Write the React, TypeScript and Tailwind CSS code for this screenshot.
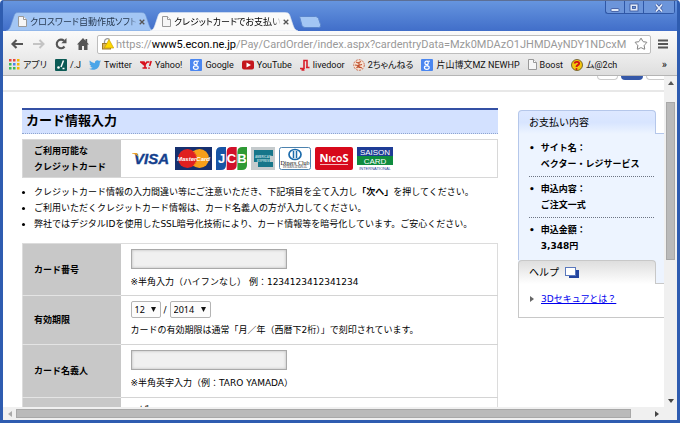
import React from "react";
import { LuStar } from "react-icons/lu";
import { FaTwitter } from "react-icons/fa";

const JP = "font-['DejaVu_Sans','Noto_Sans_CJK_JP',sans-serif]";
const UI = "font-[Roboto,'Noto_Sans_CJK_JP',sans-serif] [font-feature-settings:'palt']";

function PageIcon() {
  return (
    <svg width="9" height="11" viewBox="0 0 9 11" className="shrink-0">
      <path d="M.5.5h5l3 3v7h-8z" fill="#f6f6f6" stroke="#999" />
      <path d="M5.500.5v3h3" fill="#fff" stroke="#999" />
    </svg>
  );
}

function Tab({ title, active }: { title: string; active?: boolean }) {
  return (
    <div className={"relative flex h-[19px] w-[148px] items-center pr-[8px] pl-[12px] " + (active ? "z-10 -ml-[4px]" : "")}>
      <svg className="absolute inset-0 h-full w-full" viewBox="0 0 148 19" preserveAspectRatio="none">
        <path
          d="M0 19C3 18 4 16 5 13L8 4C9 1 10 .5 13 .5H134C138 .5 139 1 140 4L143 13C144 16 145 18 148 19Z"
          fill={active ? "#fafafa" : "#a3c6f4"}
          stroke={active ? "#dfe6f2" : "#6f97d4"}
          strokeWidth=".6"
        />
      </svg>
      <button role="tab" aria-selected={!!active} className="relative flex min-w-0 flex-1 items-center gap-[3px] text-left">
        <PageIcon />
        <span
          className={
            "block h-[14px] min-w-0 flex-1 overflow-hidden text-[9px] leading-[14px] whitespace-nowrap [mask-image:linear-gradient(to_right,#000_92%,transparent)] " +
            (active ? "text-black" : "text-[#26384f]")
          }
        >
          {title}
        </span>
      </button>
      <button aria-label="閉じる" className="relative ml-[1px] p-[1px]">
        <svg width="6" height="6" viewBox="0 0 6 6"><path d="M.7.7l4.600 4.600M5.300.7L.7 5.300" stroke="#555" strokeWidth="1.300" /></svg>
      </button>
    </div>
  );
}

function WindowButtons() {
  const b = "flex h-[13px] items-center justify-center border-r border-[#2f57a6]";
  return (
    <div className="mr-[2px] flex h-[13px] overflow-hidden rounded-b-[3px] border-b border-l border-[#2f57a6] bg-[#6c95da]">
      <button aria-label="最小化" className={b + " w-[19px]"}>
        <svg width="10" height="10"><rect x="1" y="5.500" width="8" height="3" rx="1" fill="#dfe8f7" stroke="#34519a" strokeWidth=".8" /></svg>
      </button>
      <button aria-label="最大化" className={b + " w-[19px]"}>
        <svg width="10" height="10"><rect x="1" y="1" width="8" height="7" fill="#dfe8f7" stroke="#34519a" strokeWidth=".8" /><rect x="3.500" y="3.500" width="3" height="2" fill="#6c95da" stroke="#34519a" strokeWidth=".8" /></svg>
      </button>
      <button aria-label="ウィンドウを閉じる" className={b + " w-[31px]"}>
        <svg width="10" height="10"><path d="M2 1.500l6 7M8 1.500l-6 7" stroke="#34519a" strokeWidth="3" /><path d="M2 1.500l6 7M8 1.500l-6 7" stroke="#e6edf9" strokeWidth="1.800" /></svg>
      </button>
    </div>
  );
}

function Toolbar() {
  return (
    <div className="flex h-[25px] shrink-0 items-center bg-linear-to-b from-[#fafafa] to-[#ececec] pt-[1px] pr-[9px] pl-[8px]">
      <div className="flex w-[86px] shrink-0 items-center gap-[10px]">
        <button aria-label="戻る"><svg width="12" height="10" viewBox="0 0 12 10"><path d="M12 5H2M5.500 1L1.500 5l4 4" fill="none" stroke="#555" strokeWidth="2.200" /></svg></button>
        <button aria-label="進む"><svg width="12" height="10" viewBox="0 0 12 10"><path d="M0 5h10M6.500 1l4 4-4 4" fill="none" stroke="#c4c4c4" strokeWidth="2" /></svg></button>
        <button aria-label="再読み込み"><svg width="12" height="12" viewBox="0 0 12 12"><path d="M9.500 8.500A4.300 4.300 0 1 1 9 2.800" fill="none" stroke="#555" strokeWidth="2.100" /><path d="M11.500 0v5.200H6.300z" fill="#555" /></svg></button>
        <button aria-label="ホーム"><svg width="12" height="12" viewBox="0 0 12 12"><path d="M6 0L0 6.500h1.500V12H5V8h2v4h3.500V6.500H12L10.200 4.500V1H8.500v1.700z" fill="#555" /></svg></button>
      </div>
      <div className="flex h-[19px] min-w-0 flex-1 items-center rounded-[2px] border border-[#bdbdbd] bg-white pr-[2px] pl-[4px]">
        <svg width="12" height="12" viewBox="0 0 12 12" className="shrink-0">
          <path d="M2.500 6V3.500a3 3 0 0 1 5-2" fill="none" stroke="#999" strokeWidth="1.300" />
          <rect x=".5" y="5.500" width="8" height="5.500" fill="#d9b25a" stroke="#a07c2a" />
          <path d="M7 1.500L11.700 10H2.300z" fill="#ffd800" stroke="#c8a000" strokeWidth=".7" />
        </svg>
        <label htmlFor="url" className={UI + " ml-[2px] shrink-0 text-[11px] leading-[17px] text-[#999]"}>
          https://<span className="text-black">www5.econ.ne.jp</span>
        </label>
        <input
          id="url"
          defaultValue="/Pay/CardOrder/index.aspx?cardentryData=Mzk0MDAzO1JHMDAyNDY1NDcxM"
          className={UI + " h-[17px] min-w-0 flex-1 bg-transparent text-[11px] leading-[17px] text-[#999] outline-none"}
        />
        <button aria-label="ブックマークに追加"><LuStar size={14} color="#777" strokeWidth={1.6} /></button>
      </div>
      <button aria-label="メニュー" className="ml-[7px]">
        <svg width="10" height="10"><path d="M0 1.500h10M0 5h10M0 8.500h10" stroke="#555" strokeWidth="2" /></svg>
      </button>
    </div>
  );
}

const appColors = ["#e8453c", "#e8453c", "#f4b400", "#3cba54", "#4885ed", "#f4b400", "#3cba54", "#3cba54", "#f4b400"];

function GoogleIcon() {
  return (
    <svg width="12" height="12" viewBox="0 0 12 12">
      <rect width="12" height="12" rx="1" fill="#4a86f0" />
      <circle cx="5.600" cy="3.900" r="1.700" fill="none" stroke="#fff" strokeWidth="1.200" />
      <ellipse cx="5.800" cy="8.600" rx="2.400" ry="1.800" fill="none" stroke="#fff" strokeWidth="1.200" />
      <path d="M6.500 2.200H9M6 5.500l.8 1.400" stroke="#fff" />
    </svg>
  );
}

const bookmarks: { label: string; icon: React.ReactNode }[] = [
  {
    label: "アプリ",
    icon: (
      <svg width="11" height="11">
        {appColors.map((c, i) => <rect key={i} x={(i % 3) * 4} y={Math.floor(i / 3) * 4} width="2.500" height="2.500" fill={c} />)}
      </svg>
    ),
  },
  { label: "/.J", icon: <svg width="12" height="12"><rect width="12" height="12" rx="1" fill="#0b5a55" /><path d="M8.500 1.500L6 8" stroke="#fff" strokeWidth="1.500" /><circle cx="3.500" cy="8.500" r="1.300" fill="#fff" /><path d="M7.500 9.500h2" stroke="#fff" strokeWidth="1.500" /></svg> },
  { label: "Twitter", icon: <FaTwitter size={12} color="#4aa5e8" /> },
  { label: "Yahoo!", icon: <svg width="12" height="12"><path d="M0 3h4L5 5.500 7 3h2.500M5 5.500V9M2.500 9H7M1 3.200L4.500 6" fill="none" stroke="#d8101c" strokeWidth="1.700" /><path d="M11.200 2L9.600 7M9 8.500v1.300" stroke="#d8101c" strokeWidth="1.600" /></svg> },
  { label: "Google", icon: <GoogleIcon /> },
  { label: "YouTube", icon: <svg width="12" height="12"><rect y="1.500" width="12" height="9" rx="2" fill="#c4161c" /><path d="M4.500 3.500v5L9 6z" fill="#fff" /></svg> },
  { label: "livedoor", icon: <svg width="10" height="12"><path d="M4 10V1.500h3V9" fill="none" stroke="#d9202c" strokeWidth="1.600" /><path d="M0 9.500h4M6 8.500h3.500M1.500 11h3" stroke="#d9202c" strokeWidth="1.500" /></svg> },
  { label: "2ちゃんねる", icon: <svg width="12" height="12"><circle cx="6" cy="6" r="5.300" fill="#f6e3d4" stroke="#c0502e" strokeWidth=".8" strokeDasharray="2 1" /><path d="M3 3l2 1 3-1.500M2 6l3 .5L9 5.500M3.500 9l1.500-1.500L9 9M6 3v6" fill="none" stroke="#c0502e" strokeWidth="1.100" /></svg> },
  { label: "片山博文MZ NEWHP", icon: <GoogleIcon /> },
  { label: "Boost", icon: <PageIcon /> },
  { label: "ム@2ch", icon: <svg width="12" height="12"><circle cx="6" cy="6" r="5.500" fill="#f3c610" stroke="#4a3a10" strokeWidth=".7" /><path d="M3.500 4.500C4 2 9 2.500 8 5 7.500 6.500 5.500 6 5.500 8" fill="none" stroke="#d01515" strokeWidth="1.900" /><circle cx="5.500" cy="10" r="1" fill="#d01515" /></svg> },
];

function Bookmarks() {
  return (
    <nav className={UI + " flex h-[20px] shrink-0 items-center gap-[8px] overflow-hidden border-b border-[#b5b5b5] bg-linear-to-b from-[#ececec] to-[#dedede] pr-[10px] pb-[2px] pl-[6px] text-[9px] leading-[14px] text-[#111]"}>
      {bookmarks.map((b) => (
        <button key={b.label} className="flex shrink-0 items-center gap-[3px] whitespace-nowrap">
          {b.icon}
          <span>{b.label}</span>
        </button>
      ))}
      <button aria-label="その他のブックマーク" className="ml-auto text-[11px]">»</button>
    </nav>
  );
}

function CardLogos() {
  return (
    <div className="flex items-center gap-[4px]">
      <svg role="img" aria-label="VISA" width="40" height="23">
        <text x="3" y="17" fontSize="15" fontWeight="bold" fontStyle="italic" fontFamily="Liberation Sans, sans-serif" fill="#143f8d" stroke="#143f8d" strokeWidth=".4">VISA</text>
        <path d="M1 6h5l2 5C6 8 4 7 1 6.500z" fill="#eda026" />
      </svg>
      <svg role="img" aria-label="MasterCard" width="37" height="23">
        <rect width="37" height="23" fill="#16306f" />
        <circle cx="24.500" cy="11.500" r="9.500" fill="#f79f1a" />
        <circle cx="12.500" cy="11.500" r="9.500" fill="#e02020" />
        <path d="M18.500 4.200a9.500 9.500 0 0 1 0 14.600" fill="none" stroke="#f79f1a" strokeWidth="1.500" strokeDasharray="1 1" />
        <text x="18.500" y="14" fontSize="6" fontWeight="bold" fontStyle="italic" textAnchor="middle" fontFamily="Liberation Sans, sans-serif" fill="#fff">MasterCard</text>
      </svg>
      <svg role="img" aria-label="JCB" width="31" height="23">
        <path d="M0 23V5Q0 0 5 0h5v18q0 5-5 5z" fill="#1755a5" />
        <path d="M10.700 23V5q0-5 5-5h5v18q0 5-5 5z" fill="#d0112b" />
        <path d="M21.400 23V5q0-5 5-5H31v18q0 5-5 5z" fill="#2f9a35" />
        <g fontSize="13" fontWeight="bold" textAnchor="middle" fontFamily="Liberation Sans, sans-serif" fill="#fff">
          <text x="5.500" y="16">J</text><text x="15.500" y="16">C</text><text x="26" y="16">B</text>
        </g>
      </svg>
      <svg role="img" aria-label="American Express" width="24" height="23">
        <rect width="24" height="23" fill="#c5cbcd" />
        <path d="M3 3h19v6h-3v6h3v5H7v-5H3z" fill="#16768a" />
        <g fontSize="3" fontWeight="bold" textAnchor="middle" fontFamily="Liberation Sans, sans-serif" fill="#b6d9df"><text x="12" y="11">AMERICAN</text><text x="13" y="15">EXPRESS</text></g>
      </svg>
      <svg role="img" aria-label="Diners Club International" width="32" height="23">
        <rect x=".5" y=".5" width="31" height="22" rx="2" fill="#fff" stroke="#4c82ae" />
        <ellipse cx="16" cy="7.500" rx="6" ry="5" fill="#fff" stroke="#1c6bab" strokeWidth="1.700" />
        <path d="M14.500 4v7M17.500 4v7" stroke="#1c6bab" strokeWidth="1.500" />
        <text x="16" y="17.500" fontSize="6" textAnchor="middle" fontFamily="Liberation Serif, serif" fill="#111">Diners Club</text>
        <text x="16" y="21" fontSize="3" textAnchor="middle" fontFamily="Liberation Serif, serif" fill="#111">INTERNATIONAL</text>
      </svg>
      <svg role="img" aria-label="NICOS" width="38" height="23">
        <rect width="38" height="23" rx="2" fill="#d7091b" />
        <text x="19" y="15" textAnchor="middle" fontFamily="Open Sans, sans-serif" fontWeight="bold" fill="#fff"><tspan fontSize="11">N</tspan><tspan fontSize="8">ICO</tspan><tspan fontSize="11">S</tspan></text>
        <path d="M5 17.500h28" stroke="#f6b7bb" />
      </svg>
      <svg role="img" aria-label="SAISON CARD INTERNATIONAL" width="36" height="23">
        <rect width="36" height="9" fill="#1e3c96" /><rect y="9" width="36" height="9" fill="#0f8c3f" />
        <g textAnchor="middle" fontFamily="Liberation Sans, sans-serif" fill="#fff">
          <text x="18" y="7.500" fontSize="8">SAISON</text><text x="18" y="16.500" fontSize="8">CARD</text>
          <text x="18" y="22.500" fontSize="4" fill="#1e3c96">INTERNATIONAL</text>
        </g>
      </svg>
    </div>
  );
}

const th = "w-[98px] border-b border-[#e4e4e4] bg-[#c8c8c8] pl-[11px] text-left align-middle font-bold";
const td = "border-b border-[#d4d4d4] pl-[10px] align-top";
const box = "block h-[20px] w-[156px] border border-[#a9a9a9] bg-[#f0f0f0] px-[4px] shadow-[inset_0_0_3px_#b8b8b8] outline-none";

function Select({ id, label, options, width }: { id: string; label: string; options: string[]; width: string }) {
  return (
    <span className={"relative flex h-[17px] " + width}>
      <select id={id} aria-label={label} className="w-full appearance-none rounded-[2px] border border-[#b4b4b4] bg-[#fcfcfc] pl-[3px] font-['Noto_Sans',sans-serif] text-[9px] leading-[15px]">
        {options.map((o) => <option key={o}>{o}</option>)}
      </select>
      <svg className="pointer-events-none absolute top-[6px] right-[5px]" width="5" height="5"><path d="M0 0h5L2.500 5z" fill="#111" /></svg>
    </span>
  );
}

function Main() {
  return (
    <main className="flex-1">
      <h1 className="h-[26px] border-t-2 border-b border-t-[#3450a4] border-b-[#8fa5cf] bg-[#d3e1ff] pl-[4px] text-[13px] leading-[22px] font-bold [border-bottom-style:dotted]">カード情報入力</h1>
      <table className="mt-[5px] w-full border border-[#d8d8d8]">
        <tbody>
          <tr className="h-[38px]">
            <th scope="row" className="w-[98px] bg-[#c8c8c8] pl-[11px] text-left font-bold">ご利用可能な<br />クレジットカード</th>
            <td className="pl-[10px]"><CardLogos /></td>
          </tr>
        </tbody>
      </table>
      <ul className="mt-[6px] list-disc pl-[12px] whitespace-nowrap">
        <li>クレジットカード情報の入力間違い等にご注意いただき、下記項目を全て入力し<b>「次へ」</b>を押してください。</li>
        <li>ご利用いただくクレジットカード情報は、カード名義人の方が入力してください。</li>
        <li>弊社ではデジタルIDを使用したSSL暗号化技術により、カード情報等を暗号化しています。ご安心ください。</li>
      </ul>
      <table className="mt-[11px] w-full border border-[#dcdcdc] whitespace-nowrap">
        <tbody>
          <tr className="h-[52px]">
            <th scope="row" className={th}><label htmlFor="num">カード番号</label></th>
            <td className={td + " pt-[5px]"}><input id="num" className={box} /><p className="mt-[5px]">※半角入力（ハイフンなし） 例：1234123412341234</p></td>
          </tr>
          <tr className="h-[49px]">
            <th scope="row" className={th}>有効期限</th>
            <td className={td + " pt-[5px]"}>
              <div className="flex items-center gap-[3px]">
                <Select id="month" label="月" options={["12", "11", "10"]} width="w-[30px]" /><span>/</span>
                <Select id="year" label="年" options={["2014", "2015", "2016"]} width="w-[41px]" />
              </div>
              <p className="mt-[4px]">カードの有効期限は通常「月／年（西暦下2桁）」で刻印されています。</p>
            </td>
          </tr>
          <tr className="h-[53px]">
            <th scope="row" className={th}><label htmlFor="name">カード名義人</label></th>
            <td className={td + " pt-[5px]"}><input id="name" className={box} /><p className="mt-[5px]">※半角英字入力（例：TARO YAMADA）</p></td>
          </tr>
          <tr className="h-[52px]">
            <th scope="row" className={th}></th>
            <td className={td + " pt-[4px]"}>　ぱ</td>
          </tr>
        </tbody>
      </table>
    </main>
  );
}

const item = "flex gap-[6px] before:content-['•']";

function Sidebar() {
  return (
    <aside className="mt-[2px] w-[155px] shrink-0 self-start">
      <section className="border-x border-[#b5c7ea] bg-[#edf4ff]">
        <div className="-ml-px flex bg-white">
          <h2 className="h-[24px] w-[138px] rounded-t-[4px] border border-b-0 border-[#b5c7ea] bg-linear-to-b from-[#dde8ff] via-[#d8e5ff] to-[#edf4ff] pl-[10px] text-[10px] leading-[23px]">お支払い内容</h2>
          <div className="flex-1 border-b border-[#b5c7ea] bg-white" />
        </div>
        <ul className="mr-[18px] ml-[10px] pt-[6px] font-bold">
          <li className={item + " border-b border-dotted border-[#6c7483] pb-[4px]"}><span>サイト名：<br />ベクター・レジサービス</span></li>
          <li className={item + " border-b border-dotted border-[#6c7483] pt-[4px] pb-[4px]"}><span>申込内容：<br />ご注文一式</span></li>
          <li className={item + " pt-[4px] pb-[6px]"}><span>申込金額：<br />3,348円</span></li>
        </ul>
      </section>
      <section className="border-x border-b border-[#c8c8c8]">
        <div className="-ml-px flex bg-[#edf4ff]">
          <h2 className="flex h-[24px] w-[138px] items-center gap-[6px] rounded-t-[4px] border border-b-0 border-[#c8c8c8] bg-linear-to-b from-[#dedede] to-white pl-[10px] text-[10px]">
            ヘルプ
            <svg width="14" height="12"><rect x="4" y="3" width="10" height="8" fill="#24459f" /><rect x=".5" y=".5" width="10" height="8" fill="#fff" stroke="#5a78bd" /></svg>
          </h2>
          <div className="flex-1 border-b border-[#c8c8c8]" />
        </div>
        <div className="flex h-[33px] items-center gap-[7px] pb-[4px] pl-[11px]">
          <svg width="4" height="6"><path d="M0 0l4 3-4 3z" fill="#666" /></svg>
          <a href="#help" className="text-[#0000ee] underline">3Dセキュアとは？</a>
        </div>
      </section>
    </aside>
  );
}

export default function App() {
  return (
    <div className="flex h-screen flex-col overflow-hidden rounded-t-[4px] border-x-[3px] border-b-[3px] border-[#2e5cb0] bg-[#4472cc]">
      <header className={UI + " flex h-[31px] shrink-0 items-start justify-between border-t border-[#5c6f96] bg-linear-to-b from-[#6695df] to-[#416ec9]"}>
        <div role="tablist" className="flex pt-[11px] pl-[3px]">
          <Tab title="クロスワード自動作成ソフト「ク" />
          <Tab title="クレジットカードでお支払いにつ" active />
          <button aria-label="新しいタブ" className="self-start pt-[4px]">
            <svg width="24" height="12"><path d="M1.500.5h16q2 0 3 2l2 6q1 3-2 3H7q-2 0-3-2z" fill="#a3c6f4" stroke="#5b86cd" /></svg>
          </button>
        </div>
        <WindowButtons />
      </header>
      <Toolbar />
      <Bookmarks />
      <div className="flex min-h-0 flex-1 bg-white">
        <div className={JP + " min-w-0 flex-1 overflow-hidden text-[9px] leading-[16px] text-black"} lang="ja">
          <div className="min-w-[681px]">
            <div className="flex h-[16px] items-start justify-end gap-[3px] border-b-2 border-[#e8e8e8] pr-[16px]">
              <div className="h-[4px] w-[21px] rounded-b-[4px] border border-t-0 border-[#ccc]" />
              <div className="h-[4px] w-[22px] rounded-b-[4px] bg-[#3558a8]" />
              <div className="h-[4px] w-[22px] rounded-b-[4px] border border-t-0 border-[#ccc]" />
            </div>
            <div className="flex items-start gap-[20px] pt-[16px] pr-[11px] pl-[19px]">
              <Main />
              <Sidebar />
            </div>
          </div>
        </div>
        <div className="flex w-[13px] shrink-0 flex-col items-center bg-[#f0f0f0]">
          <svg className="mt-[5px] shrink-0" width="6" height="4"><path d="M0 4l3-4 3 4z" fill="#555" /></svg>
          <div className="mt-[17px] h-[158px] w-[9px] shrink-0 border border-[#a8a8a8] bg-[#bababa]" />
          <svg className="mt-auto mb-[4px] shrink-0" width="6" height="4"><path d="M0 0l3 4 3-4z" fill="#444" /></svg>
        </div>
      </div>
      <div className="flex h-[13px] shrink-0 items-center bg-[#f0f0f0] pr-[18px] pl-[5px]">
        <svg width="4" height="6"><path d="M4 0L0 3l4 3z" fill="#aaa" /></svg>
        <div className="mr-[24px] ml-[4px] h-[9px] flex-1 border border-[#a8a8a8] bg-[#bababa]" />
        <svg width="4" height="6"><path d="M0 0l4 3-4 3z" fill="#444" /></svg>
      </div>
    </div>
  );
}
